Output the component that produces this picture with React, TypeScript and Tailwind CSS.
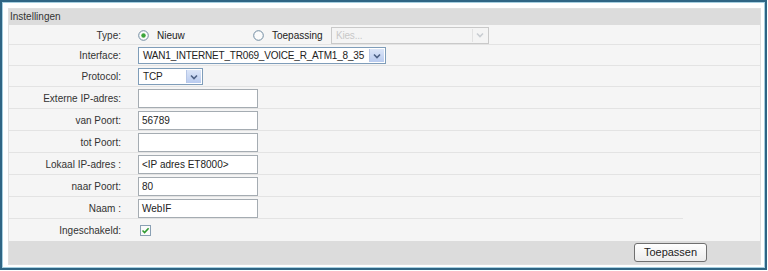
import React from 'react';

const font = { fontFamily: '"Liberation Sans", Arial, sans-serif' };

function Radio({ checked }: { checked?: boolean }) {
  return (
    <svg width="11" height="11" viewBox="0 0 11 11" className="shrink-0">
      <circle cx="5.5" cy="5.5" r="4.8" fill="#fbfbfb" stroke="#6f8aa0" strokeWidth="1" />
      {checked && <circle cx="5.5" cy="5.5" r="2.2" fill="#3aa43a" />}
    </svg>
  );
}

function Chevron({ disabled }: { disabled?: boolean }) {
  return (
    <div
      className={
        disabled
          ? 'w-[15px] h-full flex items-center justify-center bg-[#f4f4f4] border-l border-[#e2e2e2]'
          : 'w-[15px] h-full flex items-center justify-center bg-gradient-to-b from-[#dce6f8] to-[#b9cbef] border-l border-[#b7c7e6]'
      }
    >
      <svg width="8" height="6" viewBox="0 0 8 6">
        <path d="M1 1.5 L4 4.5 L7 1.5" fill="none" stroke={disabled ? '#c9cdd2' : '#4d6185'} strokeWidth="1.6" />
      </svg>
    </div>
  );
}

function Select({ value, width, disabled }: { value: string; width: string; disabled?: boolean }) {
  return (
    <div
      className={
        disabled
          ? `${width} h-[17px] flex items-stretch border border-[#c9c9c9] bg-[#f4f4f4] p-px`
          : `${width} h-[17px] flex items-stretch border border-[#7f9db9] bg-white p-px`
      }
    >
      <span
        className={
          disabled
            ? 'flex-1 pl-[3px] leading-[13px] text-[10px] tracking-[-0.2px] text-[#c8c8c8] whitespace-nowrap'
            : 'flex-1 pl-[3px] leading-[13px] text-[10px] tracking-[-0.2px] text-[#222] whitespace-nowrap'
        }
      >
        {value}
      </span>
      <Chevron disabled={disabled} />
    </div>
  );
}

function TextInput({ value }: { value?: string }) {
  return (
    <div className="w-[120px] h-[19px] border border-[#a5acb2] bg-white pl-[3px] text-[10px] leading-[17px] text-[#222]">
      {value}
    </div>
  );
}

function Row({ label, h, children, short }: { label: string; h: string; children: React.ReactNode; short?: boolean }) {
  return (
    <div className={`relative flex items-center ${h}`}>
      <div className="w-[112px] text-right text-[10px] text-[#333]">{label}</div>
      <div className="ml-[17px] flex items-center">{children}</div>
      <div className={short ? 'absolute left-0 bottom-0 w-[674px] h-px bg-[#e3e3e3]' : 'absolute left-0 right-0 bottom-0 h-px bg-[#e3e3e3]'} />
    </div>
  );
}

export default function App() {
  return (
    <div className="bg-white w-[768px] h-[271px]" style={font}>
      <div className="w-[767px] h-[270px] border-2 border-[#2f6584]">
        <div className="h-full border border-[#a7cfe0] pt-[5px] pl-[5px] pr-[3px] pb-[2px] bg-white">
          <div className="h-full border border-[#e0e0e0] bg-[#f5f5f5] flex flex-col">
            {/* Header */}
            <div className="h-[16px] bg-[#dcdcdc] pl-[1px] text-[10px] leading-[16px] text-[#333]">Instellingen</div>

            <Row label="Type:" h="h-[20px]">
              <Radio checked />
              <span className="ml-[8px] w-[96px] text-[10px] text-[#222]">Nieuw</span>
              <Radio />
              <span className="ml-[8px] w-[59px] text-[10px] text-[#222]">Toepassing</span>
              <Select value="Kies..." width="w-[158px]" disabled />
            </Row>
            <Row label="Interface:" h="h-[21px]">
              <Select value="WAN1_INTERNET_TR069_VOICE_R_ATM1_8_35" width="w-[248px]" />
            </Row>
            <Row label="Protocol:" h="h-[21px]">
              <Select value="TCP" width="w-[65px]" />
            </Row>
            <Row label="Externe IP-adres:" h="h-[22px]">
              <TextInput />
            </Row>
            <Row label="van Poort:" h="h-[22px]">
              <TextInput value="56789" />
            </Row>
            <Row label="tot Poort:" h="h-[22px]">
              <TextInput />
            </Row>
            <Row label="Lokaal IP-adres :" h="h-[22px]">
              <TextInput value="<IP adres ET8000>" />
            </Row>
            <Row label="naar Poort:" h="h-[22px]">
              <TextInput value="80" />
            </Row>
            <Row label="Naam :" h="h-[22px]" short>
              <TextInput value="WebIF" />
            </Row>
            <div className="flex items-center h-[22px]">
              <div className="w-[112px] text-right text-[10px] text-[#333]">Ingeschakeld:</div>
              <div className="ml-[19px]">
                <svg width="11" height="11" viewBox="0 0 11 11">
                  <rect x="0.5" y="0.5" width="10" height="10" fill="#fafafa" stroke="#8aa0b4" />
                  <path d="M2.5 5.5 L4.6 7.6 L8.6 3.2" fill="none" stroke="#2f9b2f" strokeWidth="1.6" />
                </svg>
              </div>
            </div>

            {/* Footer */}
            <div className="flex-1 bg-[#dcdcdc] flex items-center justify-end pr-[53px]">
              <button className="h-[19px] w-[73px] border border-[#707070] rounded-[3px] bg-gradient-to-b from-white to-[#ececec] text-[11px] leading-[17px] text-[#222]">
                Toepassen
              </button>
            </div>
          </div>
        </div>
      </div>
    </div>
  );
}
